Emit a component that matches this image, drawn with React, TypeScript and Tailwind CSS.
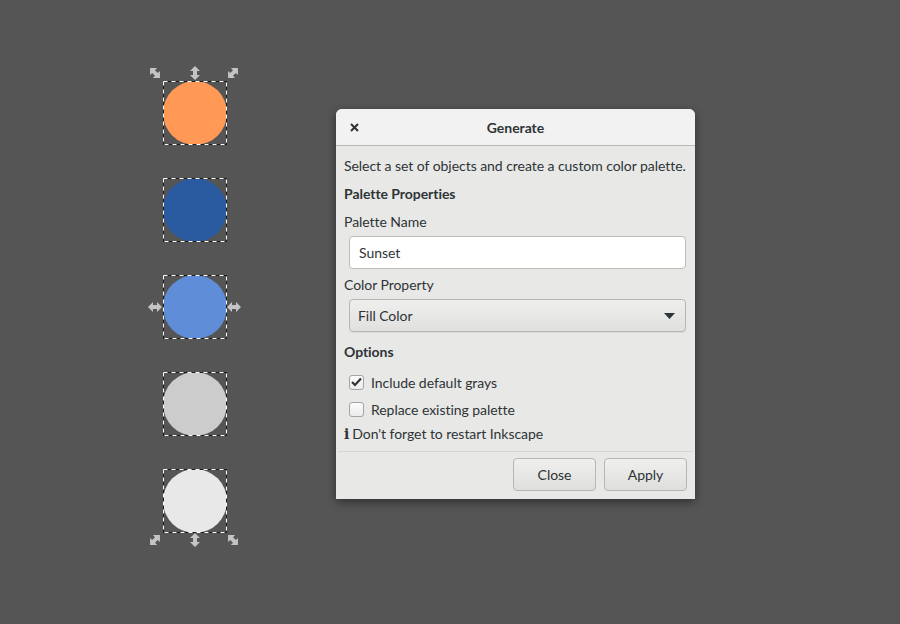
import React from 'react';

const font = { fontFamily: 'Lato, "Noto Sans", sans-serif' };

const Arrow = ({ rotate }: { rotate: number }) => (
    <svg width="14" height="14" viewBox="0 0 14 14">
        <path
            d="M7 0 L12 5 L9 5 L9 9 L12 9 L7 14 L2 9 L5 9 L5 5 L2 5 Z"
            fill="#c4c4c4"
            transform={`rotate(${rotate} 7 7)`}
        />
    </svg>
);

type Handle = { rotate: number; cls: string };

const shapes: { color: string; handles: Handle[] }[] = [
    {
        color: '#ff9955',
        handles: [
            { rotate: -45, cls: 'left-[-15px] top-[-15px]' },
            { rotate: 0, cls: 'left-[25px] top-[-15px]' },
            { rotate: 45, cls: 'left-[63px] top-[-15px]' },
        ],
    },
    { color: '#2a5aa0', handles: [] },
    {
        color: '#5f8dd8',
        handles: [
            { rotate: 90, cls: 'left-[-15px] top-[25px]' },
            { rotate: 90, cls: 'left-[64px] top-[25px]' },
        ],
    },
    { color: '#cccccc', handles: [] },
    {
        color: '#e8e8e8',
        handles: [
            { rotate: 45, cls: 'left-[-15px] top-[64px]' },
            { rotate: 0, cls: 'left-[25px] top-[64px]' },
            { rotate: -45, cls: 'left-[63px] top-[64px]' },
        ],
    },
];

const Check = ({ checked, label }: { checked: boolean; label: string }) => (
    <div className="flex items-center h-5 pl-[5px] gap-[7px]">
        <div className="w-[15px] h-[15px] rounded-[3px] border border-[#a4a4a2] bg-gradient-to-b from-[#fbfbfb] to-[#ececec] flex items-center justify-center">
            {checked && (
                <svg width="11" height="10" viewBox="0 0 11 10">
                    <path d="M1 5 L4 8 L10 1.5" stroke="#2e3436" strokeWidth="2.2" fill="none" />
                </svg>
            )}
        </div>
        <span>{label}</span>
    </div>
);

export default function App() {
    return (
        <div className="w-[900px] h-[624px] bg-[#555555] flex items-start text-[14px] text-[#2e3436] tracking-[-0.05px]" style={font}>
            <div className="ml-[163px] mt-[81px] flex flex-col gap-[33px]">
                {shapes.map((s, i) => (
                    <div key={i} className="relative w-[64px] h-[64px]">
                        <div className="absolute inset-0 rounded-full" style={{ backgroundColor: s.color }} />
                        <svg className="absolute inset-0" width="64" height="64" viewBox="0 0 64 64">
                            <rect x="0.5" y="0.5" width="63" height="63" fill="none" stroke="#1a1a1a" strokeWidth="1" />
                            <rect x="0.5" y="0.5" width="63" height="63" fill="none" stroke="#ffffff" strokeWidth="1" strokeDasharray="4 4" />
                        </svg>
                        {s.handles.map((h, j) => (
                            <div key={j} className={`absolute ${h.cls}`}>
                                <Arrow rotate={h.rotate} />
                            </div>
                        ))}
                    </div>
                ))}
            </div>

            <div className="ml-[109px] mt-[109px] w-[359px] rounded-t-[6px] overflow-hidden bg-[#e8e8e7] shadow-[0_3px_10px_rgba(0,0,0,0.45)]">
                <div className="relative h-[37px] bg-[#f2f2f2] border-b border-[#b9b9b6] flex items-center justify-center">
                    <svg className="absolute left-[14px] top-[14px]" width="9" height="9" viewBox="0 0 9 9">
                        <path d="M1 1 L8 8 M8 1 L1 8" stroke="#2e3436" strokeWidth="2" />
                    </svg>
                    <span className="font-bold">Generate</span>
                </div>
                <div className="px-[8px] pt-[10px] pb-[8px] flex flex-col">
                    <div className="h-5 leading-5 whitespace-nowrap">Select a set of objects and create a custom color palette.</div>
                    <div className="h-5 leading-5 mt-2 font-bold">Palette Properties</div>
                    <div className="h-5 leading-5 mt-2">Palette Name</div>
                    <div className="mt-1 ml-[5px] mr-px h-[33px] bg-white border border-[#bdbdba] rounded-[4px] flex items-center px-[9px]">
                        Sunset
                    </div>
                    <div className="h-5 leading-5 mt-[6px]">Color Property</div>
                    <div className="mt-1 ml-[5px] mr-px h-[33px] bg-gradient-to-b from-[#efefee] to-[#e0e0df] border border-[#b6b6b3] rounded-[4px] flex items-center justify-between px-[8px] shadow-[0_1px_0_rgba(0,0,0,0.06)]">
                        <span>Fill Color</span>
                        <svg width="11" height="6" viewBox="0 0 11 6" className="mr-[2px]">
                            <path d="M0 0 L11 0 L5.5 6 Z" fill="#2e3436" />
                        </svg>
                    </div>
                    <div className="h-5 leading-5 mt-[10px] font-bold">Options</div>
                    <div className="mt-[10px]">
                        <Check checked label="Include default grays" />
                    </div>
                    <div className="mt-[7px]">
                        <Check checked={false} label="Replace existing palette" />
                    </div>
                    <div className="h-5 leading-5 mt-[5px] flex items-center gap-[3px]">
                        <span className="font-bold" style={{ fontFamily: '"DejaVu Serif", serif' }}>i</span>
                        <span>Don't forget to restart Inkscape</span>
                    </div>
                    <div className="mt-[7px] -mx-[6px] border-t border-[#d4d4d2]" />
                    <div className="mt-[6px] flex justify-end gap-[8px]">
                        <div className="w-[83px] h-[33px] rounded-[4px] border border-[#b6b6b3] bg-gradient-to-b from-[#efefee] to-[#dfdfde] flex items-center justify-center">
                            Close
                        </div>
                        <div className="w-[83px] h-[33px] rounded-[4px] border border-[#b6b6b3] bg-gradient-to-b from-[#efefee] to-[#dfdfde] flex items-center justify-center">
                            Apply
                        </div>
                    </div>
                </div>
            </div>
        </div>
    );
}
